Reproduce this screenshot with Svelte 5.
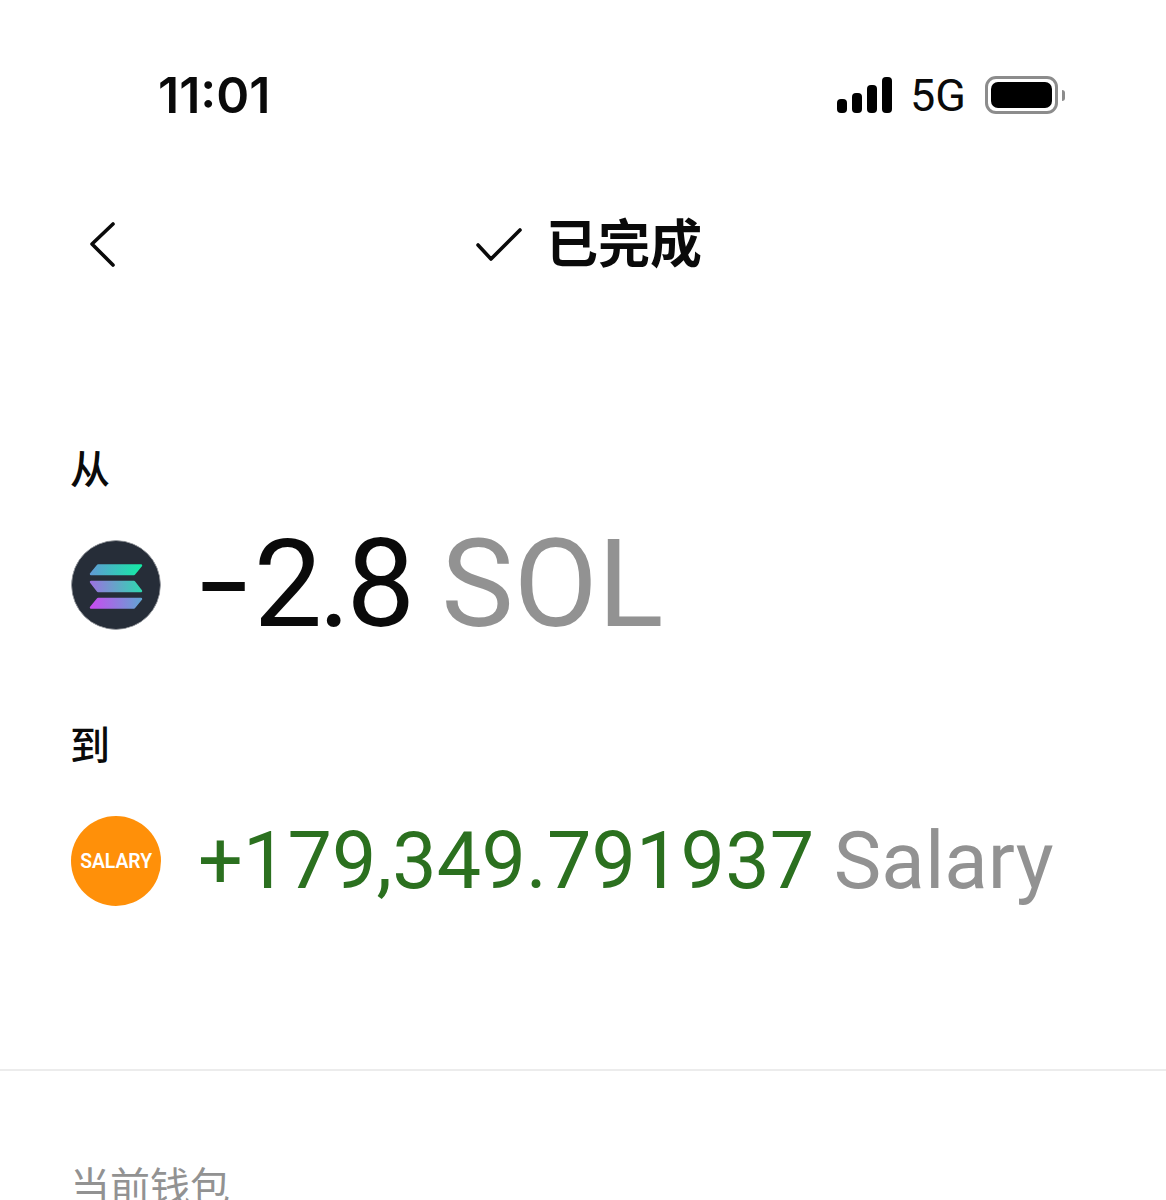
<script lang="ts">
	// status bar signal heights, shortest first
	const bars = [14, 20, 28, 36];
</script>

<div class="screen">
	<div class="status">
		<span class="time">11:01</span>
		<div class="status-right">
			<div class="signal">
				{#each bars as h}
					<span class="bar" style="height: {h}px"></span>
				{/each}
			</div>
			<span class="net">5G</span>
			<div class="battery">
				<div class="battery-body"><div class="battery-fill"></div></div>
				<div class="battery-cap"></div>
			</div>
		</div>
	</div>

	<header class="nav">
		<svg class="back" width="30" height="52" viewBox="0 0 30 52" fill="none">
			<path d="M25 9 L4 29 L25 50" stroke="#0a0a0a" stroke-width="3.6" stroke-linecap="round" stroke-linejoin="round" />
		</svg>
		<div class="title">
			<svg class="check" width="46" height="36" viewBox="0 0 46 36" fill="none">
				<path d="M2 18 L15 32 L44 3" stroke="#0a0a0a" stroke-width="3.6" stroke-linecap="round" stroke-linejoin="round" />
			</svg>
			<span class="title-text">已完成</span>
		</div>
	</header>

	<section class="swap">
		<div class="label from">从</div>
		<div class="row">
			<svg class="coin" width="90" height="90" viewBox="0 0 90 90">
				<defs>
					<linearGradient id="sol-a">
						<stop offset="0" stop-color="#5f9bd4" />
						<stop offset="1" stop-color="#14eba5" />
					</linearGradient>
					<linearGradient id="sol-b">
						<stop offset="0" stop-color="#9a72e0" />
						<stop offset="1" stop-color="#2fd8b0" />
					</linearGradient>
					<linearGradient id="sol-c">
						<stop offset="0" stop-color="#c84cf0" />
						<stop offset="1" stop-color="#62a4d2" />
					</linearGradient>
				</defs>
				<circle cx="45" cy="45" r="44.5" fill="#262d38" stroke="#9a9da2" stroke-width="1" />
				<g stroke-width="2.4" stroke-linejoin="round">
					<path d="M27 25.5 H70 L63 34 H20 Z" fill="url(#sol-a)" stroke="url(#sol-a)" />
					<path d="M20 42 H63 L70 51 H27 Z" fill="url(#sol-b)" stroke="url(#sol-b)" />
					<path d="M27 59 H70 L63 67.5 H20 Z" fill="url(#sol-c)" stroke="url(#sol-c)" />
				</g>
			</svg>
			<div class="amount big"><span class="dark"><span class="minus">−</span>2.8</span> <span class="unit">SOL</span></div>
		</div>

		<div class="label to">到</div>
		<div class="row">
			<div class="coin salary"><span>SALARY</span></div>
			<div class="amount"><span class="green">+179,349.791937</span> <span class="unit wide">Salary</span></div>
		</div>
	</section>

	<hr class="divider" />

	<div class="wallet">当前钱包</div>
</div>

<style>
	:global(body) {
		margin: 0;
		background: #fff;
	}

	.screen {
		height: 1200px;
		overflow: hidden;
		font-family: Roboto, "Noto Sans CJK SC", sans-serif;
		color: #0a0a0a;
	}

	.status {
		display: flex;
		justify-content: space-between;
		align-items: center;
		height: 50px;
		padding: 70px 101px 0 158px;
	}

	.time {
		font-family: Inter, sans-serif;
		font-size: 50px;
		font-weight: 600;
	}

	.status-right {
		display: flex;
		align-items: center;
	}

	.signal {
		display: flex;
		align-items: flex-end;
		gap: 5px;
		margin-right: 18px;
	}

	.bar {
		width: 10px;
		background: #000;
		border-radius: 4px;
	}

	.net {
		font-size: 45px;
		width: 54px;
		margin-right: 21px;
	}

	.battery {
		display: flex;
		align-items: center;
		gap: 4px;
	}

	.battery-body {
		box-sizing: border-box;
		width: 73px;
		height: 38px;
		border: 3px solid #8c8c8c;
		border-radius: 11px;
		padding: 3px;
	}

	.battery-fill {
		height: 100%;
		background: #000;
		border-radius: 7px;
	}

	.battery-cap {
		width: 3px;
		height: 11px;
		background: #8c8c8c;
		border-radius: 0 3px 3px 0;
	}

	.nav {
		display: flex;
		align-items: center;
		height: 60px;
		margin-top: 91px;
		padding-left: 88px;
	}

	.back {
		flex: none;
	}

	.title {
		display: flex;
		align-items: center;
		gap: 24px;
		margin-left: 358px;
		font-size: 52px;
		font-weight: 700;
	}

	.title-text {
		margin-bottom: 2px;
	}

	.check {
		margin-top: 8px;
	}

	.swap {
		padding-left: 71px;
	}

	.label {
		font-size: 40px;
		line-height: 48px;
		font-weight: 500;
		margin-left: -1px;
	}

	.from {
		margin-top: 176px;
	}

	.to {
		margin-top: 93px;
	}

	.row {
		display: flex;
		align-items: center;
		gap: 37px;
		height: 90px;
	}

	.from + .row,
	.to + .row {
		margin-top: 45px;
	}

	.coin {
		flex: none;
		width: 90px;
		height: 90px;
		border-radius: 50%;
	}

	.salary {
		display: flex;
		align-items: center;
		justify-content: center;
		background: #ff9009;
		color: #fff;
		font-size: 21px;
		font-weight: 600;
	}

	.salary span {
		transform: scaleX(0.92);
	}

	.amount {
		font-size: 79px;
		white-space: nowrap;
		line-height: 90px;
	}

	.big {
		font-size: 122px;
		margin-left: -4px;
	}

	.dark {
		color: #0a0a0a;
		letter-spacing: -4px;
	}

	.minus {
		display: inline-block;
		letter-spacing: -10px;
		transform: translateY(4px) scaleX(0.85);
		transform-origin: left center;
	}

	.green {
		color: #2b701f;
		letter-spacing: 0.15px;
	}

	.unit {
		color: #929292;
	}

	.wide {
		font-size: 80px;
	}

	.divider {
		border: 0;
		border-top: 2px solid #ececec;
		margin: 163px 0 0;
	}

	.wallet {
		margin: 93px 0 0 70px;
		font-size: 40px;
		line-height: 48px;
		color: #929292;
	}
</style>
